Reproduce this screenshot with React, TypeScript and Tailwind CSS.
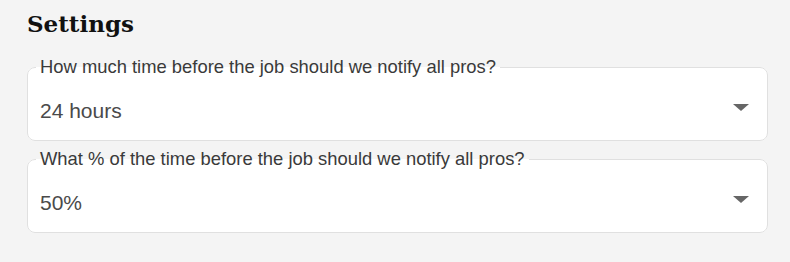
import React from "react";

interface SelectFieldProps {
  label: string;
  value: string;
}

function SelectField({ label, value }: SelectFieldProps) {
  return (
    <fieldset className="h-[84px] rounded-lg border border-[#e0e0e0] bg-white px-0">
      <legend className="ml-[8px] px-[4px] text-[18.4px] leading-[20px] text-[#3a3a3a]">{label}</legend>
      <div className="flex items-center justify-between pl-[12px] pr-[18px] pt-[22px]">
        <span className="text-[21px] leading-[24px] text-[#4a4a4a]">{value}</span>
        <svg width="16" height="7" viewBox="0 0 16 7" className="mt-[-8px]">
          <path d="M0 0h16l-8 7z" fill="#666" />
        </svg>
      </div>
    </fieldset>
  );
}

export default function App() {
  return (
    <div className="min-h-[262px] w-[790px] bg-[#f4f4f4] pl-[27px] pr-[22px] pt-[6px] font-['Liberation_Sans',Arial,sans-serif]">
      <h2 className="font-['DejaVu_Serif',serif] text-[23px] font-bold leading-[36px] text-[#111]">Settings</h2>
      <div className="mt-[15px] flex flex-col gap-[8px]">
        <SelectField label="How much time before the job should we notify all pros?" value="24 hours" />
        <SelectField label="What % of the time before the job should we notify all pros?" value="50%" />
      </div>
    </div>
  );
}
